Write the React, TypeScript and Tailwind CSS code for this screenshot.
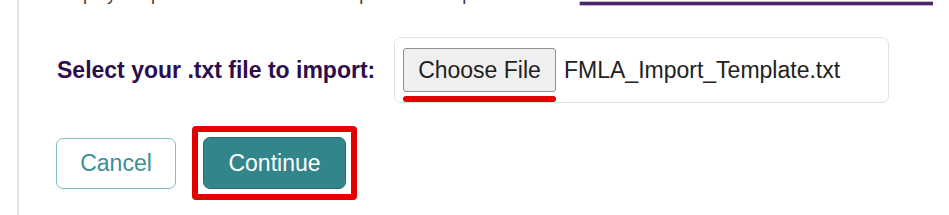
import React from "react";

export default function App() {
  return (
    <div className="w-[949px] h-[215px] bg-white overflow-hidden font-['Liberation_Sans',Arial,sans-serif]">
      <div className="ml-[17px] h-full border-l-2 border-[#e3e3e3] pl-[38px] pr-[16px]">
        {/* cut-off top line */}
        <div className="flex h-[8px] overflow-hidden">
          <span className="-mt-[16px] text-[18px] leading-[20px] text-[#3a3a3a] whitespace-nowrap">
            Display template of the file format to upload and import
          </span>
          <div className="ml-auto mt-[2px] w-[353px] h-[3px] bg-[#4a2768] shadow-[0_0_0_0.5px_#8a6fa3]" />
        </div>

        {/* file row */}
        <div className="mt-[29px] flex items-center">
          <label className="w-[337px] shrink-0 text-[23px] font-bold text-[#2c0d4d] leading-none">
            Select your .txt file to import:
          </label>
          <div className="w-[495px] h-[66px] border border-[#e2e2e2] rounded-[7px] flex items-center pl-[8px]">
            <div className="relative">
              <button className="w-[153px] h-[44px] bg-[#efefef] border border-[#8f8f8f] rounded-[3px] text-[23px] text-[#1f1f1f] leading-none">
                Choose File
              </button>
              <div className="absolute left-0 w-[153px] top-[48px] h-[6px] rounded-full bg-[#e30000]" />
            </div>
            <span className="ml-[8px] text-[23px] text-[#222222] leading-none">
              FMLA_Import_Template.txt
            </span>
          </div>
        </div>

        {/* buttons row */}
        <div className="mt-[23px] flex items-center">
          <button className="-ml-[1px] w-[120px] h-[51px] border border-[#80bec3] rounded-[7px] text-[23px] text-[#3e8e95] leading-none bg-white">
            Cancel
          </button>
          <div className="ml-[16px] border-[6px] border-[#e40000] rounded-[4px] px-[5px] py-[5px]">
            <button className="w-[143px] h-[52px] bg-[#32858a] border border-[#286b70] rounded-[7px] text-[23px] text-white leading-none">
              Continue
            </button>
          </div>
        </div>
      </div>
    </div>
  );
}
